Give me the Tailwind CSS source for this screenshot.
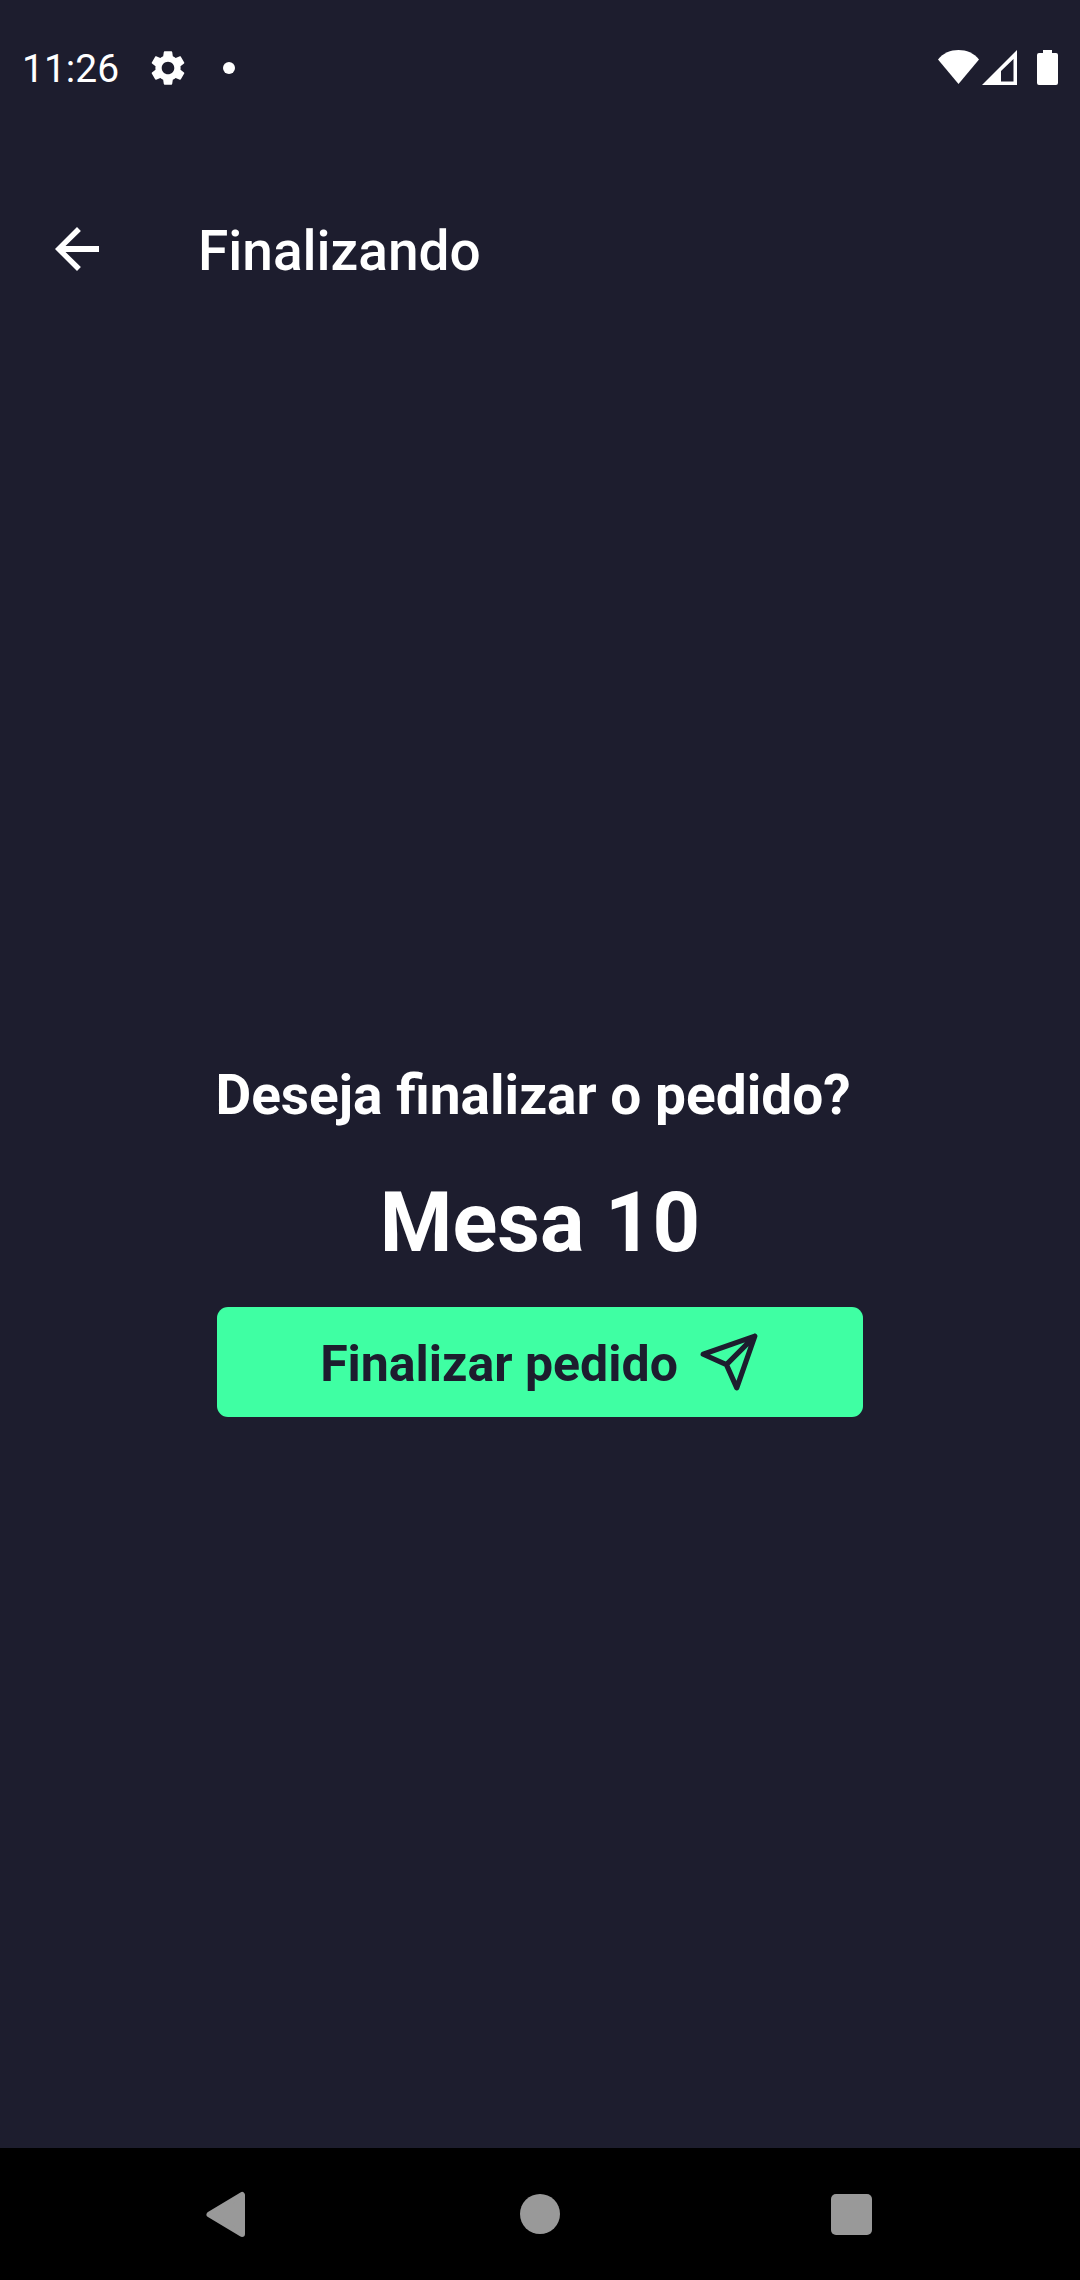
<!DOCTYPE html>
<html lang="pt-BR">
<head>
<meta charset="utf-8">
<meta name="viewport" content="width=device-width, initial-scale=1">
<title>Finalizando</title>
<script src="https://cdn.jsdelivr.net/npm/@tailwindcss/browser@4"></script>
</head>
<body class="flex min-h-screen flex-col bg-[#1d1d2e] font-[Roboto,sans-serif] text-white">
  <!-- Status bar -->
  <div class="mb-9 flex h-[136px] items-center justify-between px-[22px]">
    <div class="flex items-center">
      <span class="pt-0.5 text-[39px] leading-[46px]">11:26</span>
      <svg class="ml-7 size-[42px]" viewBox="0 0 24 24" fill="currentColor" aria-hidden="true"><path d="M19.14 12.94c.04-.3.06-.61.06-.94 0-.32-.02-.64-.07-.94l2.03-1.58c.18-.14.23-.41.12-.61l-1.92-3.32c-.12-.22-.37-.29-.59-.22l-2.39.96c-.5-.38-1.03-.7-1.62-.94l-.36-2.54c-.04-.24-.24-.41-.48-.41h-3.84c-.24 0-.43.17-.47.41l-.36 2.54c-.59.24-1.13.57-1.62.94l-2.39-.96c-.22-.08-.47 0-.59.22L2.74 8.87c-.12.21-.08.47.12.61l2.03 1.58c-.05.3-.09.63-.09.94s.02.64.07.94l-2.03 1.58c-.18.14-.23.41-.12.61l1.92 3.32c.12.22.37.29.59.22l2.39-.96c.5.38 1.03.7 1.62.94l.36 2.54c.05.24.24.41.48.41h3.84c.24 0 .44-.17.47-.41l.36-2.54c.59-.24 1.13-.56 1.62-.94l2.39.96c.22.08.47 0 .59-.22l1.92-3.32c.12-.22.07-.47-.12-.61l-2.01-1.58zM12 15.6c-1.98 0-3.6-1.62-3.6-3.6s1.62-3.6 3.6-3.6 3.6 1.62 3.6 3.6-1.62 3.6-3.6 3.6z"/></svg>
      <span class="ml-[34px] size-3 rounded-full bg-white"></span>
    </div>
    <div class="flex items-center">
      <svg class="h-9 w-[41px]" viewBox="0 0 41 36" fill="currentColor" aria-hidden="true"><path d="M0 9.500C5 3 12.500 0 20.500 0S36 3 41 9.500L20.500 34Z"/></svg>
      <svg class="ml-[3px] h-9 w-[35px]" viewBox="0 0 35 36" fill="currentColor" fill-rule="evenodd" aria-hidden="true"><path d="M0 35L35 0V35ZM19 21V31.500H31.500V9Z"/></svg>
      <svg class="ml-5 h-9 w-[21px]" viewBox="0 0 21 36" fill="currentColor" aria-hidden="true"><path d="M6 -1H15V3H19Q21 3 21 5V33Q21 35 19 35H2Q0 35 0 33V5Q0 3 2 3H6Z"/></svg>
    </div>
  </div>

  <header class="flex h-[154px] items-center px-11">
    <button type="button" aria-label="Voltar">
      <svg class="size-[66px]" viewBox="0 0 24 24" fill="currentColor" aria-hidden="true"><path d="M20 10.900H7.830l5.590-5.490L12 4l-8 8 8 8 1.410-1.410L7.830 13.100H20z"/></svg>
    </button>
    <h1 class="ml-[88px] pt-1 text-[55px] leading-16 font-medium">Finalizando</h1>
  </header>

  <main class="flex flex-1 flex-col items-center justify-center px-[4%] pt-1.5">
    <h2 class="mb-12 pr-3.5 text-[55px] leading-16 font-bold">Deseja finalizar o pedido?</h2>
    <p class="mb-9 text-[83px] leading-24 font-bold">Mesa 10</p>
    <button type="button" class="flex h-[110px] w-[65%] items-center justify-center gap-5 rounded-[11px] bg-[#3fffa3] text-[#1d1d2e]">
      <span class="pt-1 text-[50px] leading-[58px] font-bold">Finalizar pedido</span>
      <svg class="size-[62px]" viewBox="0 0 24 24" fill="none" stroke="currentColor" stroke-width="2" stroke-linecap="round" stroke-linejoin="round" aria-hidden="true"><path d="M22 2L11 13M22 2L15 22L11 13L2 9Z"/></svg>
    </button>
  </main>

  <!-- System navigation -->
  <nav class="flex h-[132px] items-center justify-center bg-black text-[#999]">
    <button type="button" class="flex w-[311px] justify-center" aria-label="Voltar">
      <svg class="size-12" viewBox="0 0 48 48" fill="currentColor" stroke="currentColor" stroke-width="6" stroke-linejoin="round" aria-hidden="true"><path d="M4.500 24.500L37 5V44Z"/></svg>
    </button>
    <button type="button" class="flex w-[311px] justify-center" aria-label="Início">
      <span class="size-10 rounded-full bg-[#999]"></span>
    </button>
    <button type="button" class="flex w-[311px] justify-center" aria-label="Recentes">
      <span class="size-[41px] rounded-[5px] bg-[#999]"></span>
    </button>
  </nav>
</body>
</html>
